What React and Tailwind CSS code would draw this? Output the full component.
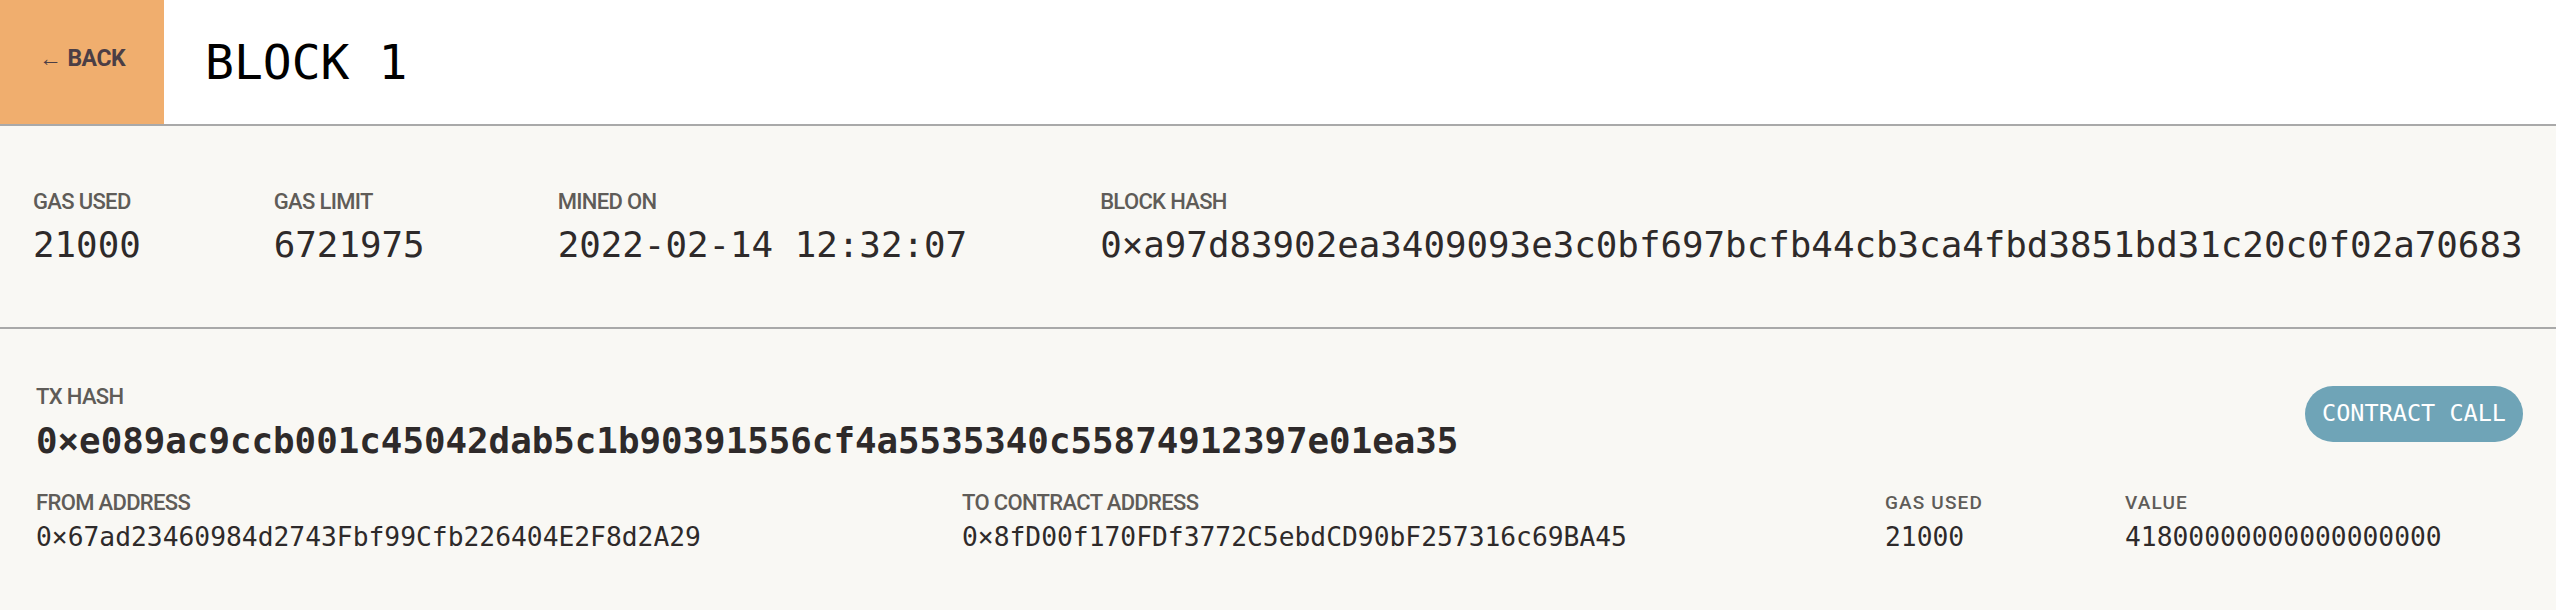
import React from 'react';

const mono = { fontFamily: '"DejaVu Sans Mono", "Liberation Mono", monospace' };

const Label = ({ children, className = '' }) => (
    <div className={`font-['Roboto',sans-serif] font-medium text-[22px] leading-[22px] tracking-[-0.03em] text-[#5f5c58] uppercase ${className}`}>
        {children}
    </div>
);

const blockStats = [
    { label: 'Gas Used', value: '21000' },
    { label: 'Gas Limit', value: '6721975' },
    { label: 'Mined On', value: '2022-02-14 12:32:07' },
    { label: 'Block Hash', value: '0×a97d83902ea3409093e3c0bf697bcfb44cb3ca4fbd3851bd31c20c0f02a70683' },
];

export default function App() {
    return (
        <div className="w-full min-h-screen bg-[#f9f8f4] text-[#2e2a2a]">
            {/* Header */}
            <div className="h-[126px] flex bg-white border-b-2 border-[#a9a9a9]">
                <button className="w-[164px] h-full bg-[#f0ae6e] flex items-center justify-center pb-[6px] text-[#4b3e45] font-['Roboto',sans-serif] font-bold text-[23px] tracking-[-0.02em]">
                    <span className="mr-[6px] font-normal">←</span>BACK
                </button>
                <h1 className="ml-[41px] flex items-center text-[48px] leading-none text-black" style={mono}>
                    BLOCK 1
                </h1>
            </div>

            {/* Block stats */}
            <div className="flex gap-[133px] pl-[33px] pt-[65px] pb-[64px] border-b-2 border-[#a9a9a9]">
                {blockStats.map((s) => (
                    <div key={s.label} className="flex flex-col gap-[14px]">
                        <Label>{s.label}</Label>
                        <div className="text-[35.8px] leading-[36px] whitespace-nowrap" style={mono}>{s.value}</div>
                    </div>
                ))}
            </div>

            {/* Transaction */}
            <div className="pl-[36px] pr-[33px] pt-[57px]">
                <div className="flex justify-between items-start">
                    <div className="flex flex-col gap-[15px]">
                        <Label>Tx Hash</Label>
                        <div className="text-[35.8px] leading-[36px] font-bold" style={mono}>
                            0×e089ac9ccb001c45042dab5c1b90391556cf4a5535340c55874912397e01ea35
                        </div>
                    </div>
                    <div className="h-[56px] px-[17px] rounded-full bg-[#6fa4b7] text-white text-[23.5px] flex items-center" style={mono}>
                        CONTRACT CALL
                    </div>
                </div>

                <div className="flex mt-[33px]">
                    <div className="w-[926px] flex flex-col gap-[10px]">
                        <Label>From Address</Label>
                        <div className="text-[26.3px] leading-[26px]" style={mono}>0×67ad23460984d2743Fbf99Cfb226404E2F8d2A29</div>
                    </div>
                    <div className="w-[923px] flex flex-col gap-[10px]">
                        <Label>To Contract Address</Label>
                        <div className="text-[26.3px] leading-[26px]" style={mono}>0×8fD00f170FDf3772C5ebdCD90bF257316c69BA45</div>
                    </div>
                    <div className="w-[240px] flex flex-col gap-[10px]">
                        <div className="font-['Roboto',sans-serif] font-medium text-[19px] leading-[22px] tracking-[0.06em] text-[#5f5c58]">GAS USED</div>
                        <div className="text-[26.3px] leading-[26px]" style={mono}>21000</div>
                    </div>
                    <div className="flex flex-col gap-[10px]">
                        <div className="font-['Roboto',sans-serif] font-medium text-[19px] leading-[22px] tracking-[0.06em] text-[#5f5c58]">VALUE</div>
                        <div className="text-[26.3px] leading-[26px]" style={mono}>41800000000000000000</div>
                    </div>
                </div>
            </div>
        </div>
    );
}
